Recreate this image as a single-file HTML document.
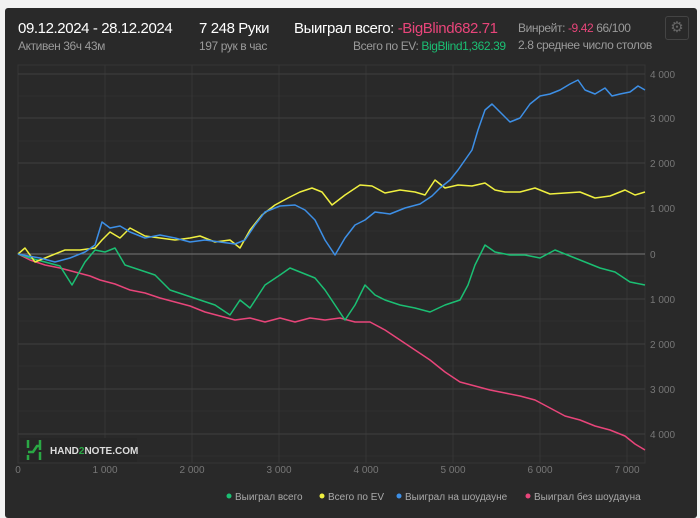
<!DOCTYPE html><html><head><meta charset="utf-8"><style>
body{margin:0;width:700px;height:513px;background:#f2f2f2;overflow:hidden;font-family:"Liberation Sans",sans-serif}
.p{position:absolute;left:5px;top:8px;width:692px;height:510px;background:#292929;border-radius:3px}
.t{position:absolute;white-space:nowrap;font-family:"Liberation Sans",sans-serif;letter-spacing:-0.4px}
.w{color:#fff;font-size:15px}.g{color:#9a9a9a;font-size:12px}
</style></head><body><div class="p"></div>
<div class="t w" style="left:18px;top:20px">09.12.2024 - 28.12.2024</div>
<div class="t g" style="left:18px;top:39px">Активен 36ч 43м</div>
<div class="t w" style="left:199px;top:20px">7 248 Руки</div>
<div class="t g" style="left:199px;top:39px">197 рук в час</div>
<div class="t w" style="left:294px;top:20px">Выиграл всего: <span style="color:#e8457a">-BigBlind682.71</span></div>
<div class="t g" style="left:353px;top:39px">Всего по EV: <span style="color:#1bbf73">BigBlind1,362.39</span></div>
<div class="t g" style="left:518px;top:21px">Винрейт: <span style="color:#e8457a">-9.42</span> 66/100</div>
<div class="t g" style="left:518px;top:38px">2.8 среднее число столов</div>
<div style="position:absolute;left:665px;top:16px;width:22px;height:22px;border:1px solid #444;border-radius:3px;color:#666;font-size:15px;text-align:center;line-height:22px">⚙</div>
<svg style="position:absolute;left:0;top:0" width="700" height="513">
<g stroke="#353535" stroke-width="1">
<path d="M18 65H645V463H18Z" fill="none"/>
<path d="M18 96H645M18 141H645M18 186H645M18 231H645M18 276H645M18 321H645M18 366H645M18 411H645M18 456H645" stroke="#303030"/>
<path d="M105 65V463M192 65V463M279 65V463M366 65V463M453 65V463M540 65V463M627 65V463"/>
<path d="M18 74H645M18 118H645M18 163H645M18 208H645M18 299H645M18 344H645M18 389H645M18 434H645" stroke="#3f3f3f"/>
<path d="M18 254H645" stroke="#777"/>
</g>
<g font-size="10" fill="#777" font-family="Liberation Sans">
<text x="650" y="78">4 000</text><text x="650" y="122">3 000</text><text x="650" y="167">2 000</text><text x="650" y="212">1 000</text><text x="650" y="258">0</text><text x="650" y="303">1 000</text><text x="650" y="348">2 000</text><text x="650" y="393">3 000</text><text x="650" y="438">4 000</text>
<g text-anchor="middle"><text x="18" y="473">0</text><text x="105" y="473">1 000</text><text x="192" y="473">2 000</text><text x="279" y="473">3 000</text><text x="366" y="473">4 000</text><text x="453" y="473">5 000</text><text x="540" y="473">6 000</text><text x="627" y="473">7 000</text></g>
</g>
<g fill="none" stroke-width="1.5" stroke-linejoin="round">
<polyline stroke="#e8457a" points="18,254 30,260 45,265 60,268 75,272 90,276 100,280 115,284 130,290 145,293 160,298 175,302 190,306 205,312 220,316 235,320 250,318 265,322 280,318 295,322 310,318 325,320 340,318 355,322 370,322 385,330 400,340 415,350 430,360 445,372 460,382 475,386 490,390 505,393 520,396 535,400 550,408 565,416 580,420 595,426 610,430 625,436 635,444 645,450"/>
<polyline stroke="#1bbf73" points="18,254 30,258 45,262 60,266 72,285 85,262 95,250 105,252 115,248 125,265 140,270 155,275 170,290 185,295 200,300 215,305 230,315 240,300 250,308 265,285 280,275 290,268 300,272 315,278 325,290 335,305 345,320 355,305 365,285 375,295 385,300 400,305 415,308 430,312 445,305 460,300 468,285 475,265 485,245 495,252 510,255 525,255 540,258 555,250 570,256 585,262 600,268 615,272 630,282 645,285"/>
<polyline stroke="#f0f040" points="18,254 25,248 35,262 50,256 65,250 80,250 95,248 102,240 110,232 120,238 130,228 145,236 160,238 175,240 190,238 200,236 215,242 230,240 240,248 250,230 262,215 275,205 288,198 300,192 312,188 322,192 332,205 345,195 360,185 372,186 385,193 400,190 415,192 425,195 435,180 445,188 458,185 472,186 485,183 495,190 505,192 520,192 535,188 550,194 565,193 580,192 595,198 610,196 625,190 635,195 645,192"/>
<polyline stroke="#3d8fe6" points="18,254 28,256 40,258 55,262 70,258 85,252 95,245 102,222 110,228 120,226 130,232 145,238 160,235 175,238 190,242 205,240 220,242 235,244 245,240 255,225 265,212 280,206 295,205 305,210 315,220 325,240 335,255 345,238 355,225 365,220 375,212 390,214 405,208 420,204 432,196 440,188 450,180 458,170 465,160 472,150 478,130 485,110 492,104 500,112 510,122 520,118 530,104 540,96 550,94 560,90 570,84 578,80 585,90 595,94 605,88 612,96 620,94 630,92 638,86 645,90"/>
</g>
<g font-size="10" fill="#aaa" font-family="Liberation Sans">
<circle cx="229" cy="496" r="2.5" fill="#1bbf73"/><text x="235" y="500">Выиграл всего</text>
<circle cx="322" cy="496" r="2.5" fill="#f0f040"/><text x="328" y="500">Всего по EV</text>
<circle cx="399" cy="496" r="2.5" fill="#3d8fe6"/><text x="405" y="500">Выиграл на шоудауне</text>
<circle cx="528" cy="496" r="2.5" fill="#e8457a"/><text x="534" y="500">Выиграл без шоудауна</text>
</g>
<rect x="20" y="438" width="117" height="24" fill="#262626"/>
<path d="M28 440V448M28 452H33L37 446H40M40 440V450M28 455V460M40 452V460" stroke="#2aa844" stroke-width="2.5" fill="none"/>
<text x="50" y="454" font-size="10" font-weight="bold" fill="#ddd" font-family="Liberation Sans">HAND<tspan fill="#2aa844">2</tspan>NOTE.COM</text>
</svg></body></html>
